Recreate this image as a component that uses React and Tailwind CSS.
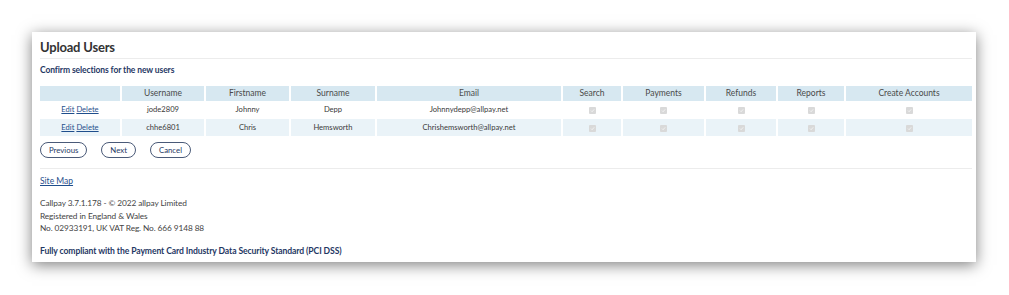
import React from "react";

const cols = [
  { label: "", w: 81 },
  { label: "Username", w: 84 },
  { label: "Firstname", w: 85 },
  { label: "Surname", w: 86 },
  { label: "Email", w: 186 },
  { label: "Search", w: 60 },
  { label: "Payments", w: 83 },
  { label: "Refunds", w: 72 },
  { label: "Reports", w: 68 },
  { label: "Create Accounts", w: 127 },
];

const rows = [
  ["jode2809", "Johnny", "Depp", "Johnnydepp@allpay.net"],
  ["chhe6801", "Chris", "Hemsworth", "Chrishemsworth@allpay.net"],
];

function Check() {
  return (
    <span className="inline-flex h-[7px] w-[7px] items-center justify-center rounded-[1px] bg-[#d9d9d9] align-middle">
      <svg width="5" height="5" viewBox="0 0 10 10">
        <path d="M2 5.2 L4.2 7.4 L8.2 2.8" fill="none" stroke="#f5f5f5" strokeWidth="1.8" />
      </svg>
    </span>
  );
}

export default function App() {
  return (
    <div className="w-[1009px] h-[295px] bg-white pl-[32px] pt-[32px]" style={{ fontFamily: "Lato, 'Open Sans', sans-serif" }}>
      <div className="w-[944px] h-[230px] bg-white shadow-[0_3px_14px_rgba(0,0,0,0.5)] px-[8px] pt-[7px]">
        <div className="w-[932px]">
          <h1 className="text-[13px] font-bold text-[#333] leading-[17px] pb-[2px] border-b border-[#ececec] tracking-[-0.2px]">Upload Users</h1>
          <h2 className="mt-[6px] text-[8.5px] font-bold text-[#1f3864] leading-[11px] tracking-[-0.1px]">Confirm selections for the new users</h2>
          <table className="mt-[10px] w-[932px] table-fixed border-collapse text-[7.6px] text-[#3a3a3a]">
            <colgroup>
              {cols.map((c, i) => (
                <col key={i} style={{ width: c.w }} />
              ))}
            </colgroup>
            <thead>
              <tr className="bg-[#d7e8f1] h-[15px]">
                {cols.map((c, i) => (
                  <th key={i} className="font-normal text-[8.5px] text-center text-[#4a4a4a] border-r-2 border-white last:border-r-0 p-0 leading-[15px]">
                    {c.label}
                  </th>
                ))}
              </tr>
            </thead>
            <tbody>
              {rows.map((r, ri) => (
                <tr key={ri} className={ri === 1 ? "bg-[#eaf3f8] h-[17px]" : "bg-white h-[18px]"}>
                  <td className="text-center border-r-2 border-white p-0">
                    <a className="underline text-[#1f4e8c] mr-[2px]">Edit</a>
                    <a className="underline text-[#1f4e8c]">Delete</a>
                  </td>
                  {r.map((v, i) => (
                    <td key={i} className="text-center border-r-2 border-white p-0">{v}</td>
                  ))}
                  {[0, 1, 2, 3, 4].map((i) => (
                    <td key={i} className="text-center border-r-2 border-white last:border-r-0 p-0 leading-[8px]">
                      <Check />
                    </td>
                  ))}
                </tr>
              ))}
            </tbody>
          </table>
          <div className="mt-[6px] flex gap-[14px] pb-[10px] border-b border-[#ececec]">
            {["Previous", "Next", "Cancel"].map((b) => (
              <button key={b} className="h-[16px] rounded-full border border-[#4a5a78] bg-white px-[8px] text-[7.8px] text-[#1f3864] leading-[14px]">
                {b}
              </button>
            ))}
          </div>
          <div className="mt-[6px] text-[8.5px] leading-[12px]">
            <a className="underline text-[#1f4e8c]">Site Map</a>
          </div>
          <div className="mt-[10px] text-[8.3px] leading-[12.5px] text-[#444] tracking-[-0.1px]">
            <div>Callpay 3.7.1.178 - © 2022 allpay Limited</div>
            <div>Registered in England &amp; Wales</div>
            <div>No. 02933191, UK VAT Reg. No. 666 9148 88</div>
          </div>
          <div className="mt-[10px] text-[8.6px] font-bold text-[#1f3864] leading-[12px] tracking-[-0.1px]">
            Fully compliant with the Payment Card Industry Data Security Standard (PCI DSS)
          </div>
        </div>
      </div>
    </div>
  );
}
